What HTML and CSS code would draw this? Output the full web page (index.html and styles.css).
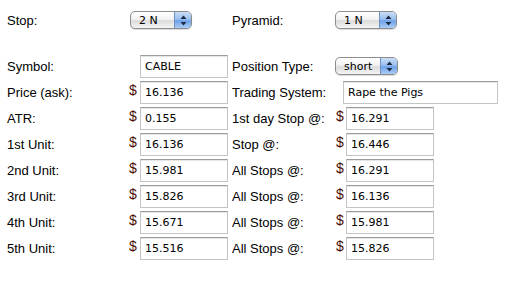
FILE: index.html
```html
<!DOCTYPE html>
<html>
<head>
<meta charset="utf-8">
<link rel="stylesheet" href="styles.css">
</head>
<body>
<div class="form">
  <div class="lbl">Stop:</div>
  <div class="c2 sel-cell"><div class="sel"><span class="sel-text">2 N</span><span class="sel-btn"><svg width="7" height="11" viewBox="0 0 7 11"><path d="M3.5 0.5 L6.5 4 L0.5 4 Z M0.5 7 L6.5 7 L3.5 10.5 Z" fill="#1d2a44"/></svg></span></div></div>
  <div class="lbl c3">Pyramid:</div>
  <div class="c4 sel-cell"><div class="sel"><span class="sel-text">1 N</span><span class="sel-btn"><svg width="7" height="11" viewBox="0 0 7 11"><path d="M3.5 0.5 L6.5 4 L0.5 4 Z M0.5 7 L6.5 7 L3.5 10.5 Z" fill="#1d2a44"/></svg></span></div></div>

  <div class="spacer"></div>

  <div class="lbl">Symbol:</div>
  <div class="c2"><span class="dol"></span><input class="inp" value="CABLE"></div>
  <div class="lbl c3">Position Type:</div>
  <div class="c4 sel-cell"><div class="sel sel-short"><span class="sel-text">short</span><span class="sel-btn"><svg width="7" height="11" viewBox="0 0 7 11"><path d="M3.5 0.5 L6.5 4 L0.5 4 Z M0.5 7 L6.5 7 L3.5 10.5 Z" fill="#1d2a44"/></svg></span></div></div>

  <div class="lbl">Price (ask):</div>
  <div class="c2"><span class="dol">$</span><input class="inp" value="16.136"></div>
  <div class="lbl c3">Trading System:</div>
  <div class="c4 wide-cell"><input class="inp wide" value="Rape the Pigs"></div>

  <div class="lbl">ATR:</div>
  <div class="c2"><span class="dol">$</span><input class="inp" value="0.155"></div>
  <div class="lbl c3">1st day Stop @:</div>
  <div class="c4"><span class="dol">$</span><input class="inp" value="16.291"></div>

  <div class="lbl">1st Unit:</div>
  <div class="c2"><span class="dol">$</span><input class="inp" value="16.136"></div>
  <div class="lbl c3">Stop @:</div>
  <div class="c4"><span class="dol">$</span><input class="inp" value="16.446"></div>

  <div class="lbl">2nd Unit:</div>
  <div class="c2"><span class="dol">$</span><input class="inp" value="15.981"></div>
  <div class="lbl c3">All Stops @:</div>
  <div class="c4"><span class="dol">$</span><input class="inp" value="16.291"></div>

  <div class="lbl">3rd Unit:</div>
  <div class="c2"><span class="dol">$</span><input class="inp" value="15.826"></div>
  <div class="lbl c3">All Stops @:</div>
  <div class="c4"><span class="dol">$</span><input class="inp" value="16.136"></div>

  <div class="lbl">4th Unit:</div>
  <div class="c2"><span class="dol">$</span><input class="inp" value="15.671"></div>
  <div class="lbl c3">All Stops @:</div>
  <div class="c4"><span class="dol">$</span><input class="inp" value="15.981"></div>

  <div class="lbl">5th Unit:</div>
  <div class="c2"><span class="dol">$</span><input class="inp" value="15.516"></div>
  <div class="lbl c3">All Stops @:</div>
  <div class="c4"><span class="dol">$</span><input class="inp" value="15.826"></div>
</div>
</body>
</html>
```
FILE: styles.css
```css
html, body {
  margin: 0;
  padding: 0;
  background: #ffffff;
}
body {
  padding: 7px 0 0 7px;
  font-family: "Liberation Sans", Arial, sans-serif;
  font-size: 13px;
  color: #000;
}
.form {
  display: grid;
  grid-template-columns: 118px 105px 100px 180px;
  grid-template-rows: 26px 20px;
  grid-auto-rows: 26px;
}
.spacer {
  grid-column: 1 / 5;
}
.lbl {
  display: flex;
  align-items: center;
  white-space: nowrap;
}
.c3 { padding-left: 2px; }
.c2, .c4 {
  display: flex;
  align-items: center;
}
.c2 { padding-left: 4px; }
.c4 { padding-left: 6px; }
.sel-cell.c2 { padding-left: 5px; }
.sel-cell.c4 { padding-left: 5px; }
.wide-cell.c4 { padding-left: 13px; }
.dol {
  width: 7px;
  margin-right: 4px;
  color: #4a0c04;
  font-size: 14px;
  line-height: 1;
  position: relative;
  top: -2px;
}
.c4 .dol { margin-right: 3px; }
.inp {
  box-sizing: border-box;
  width: 88px;
  height: 23px;
  margin: 0;
  padding: 0 0 0 4px;
  border: 1px solid #c4c4c4;
  border-top-color: #9c9c9c;
  box-shadow: inset 0 1px 0 #e6e6e6;
  background: #fff;
  font-family: "DejaVu Sans", Verdana, sans-serif;
  font-size: 11px;
  color: #000;
  outline: none;
}
.inp.wide { width: 155px; }
.sel {
  box-sizing: border-box;
  width: 62px;
  height: 18px;
  display: flex;
  align-items: stretch;
  border: 1px solid #8d8d8d;
  border-radius: 5px;
  overflow: hidden;
  background: linear-gradient(#ffffff 0%, #f2f2f2 45%, #dcdcdc 55%, #f4f4f4 100%);
  box-shadow: 0 1px 1px rgba(0,0,0,0.15);
}
.sel-short { width: 63px; }
.sel-text {
  flex: 1;
  display: flex;
  align-items: center;
  padding-left: 8px;
  font-family: "DejaVu Sans", Verdana, sans-serif;
  font-size: 11px;
  color: #000;
}
.sel-btn {
  width: 16px;
  display: flex;
  align-items: center;
  justify-content: center;
  border-left: 1px solid #6f8fc0;
  background: linear-gradient(#c9dcf6 0%, #9cc0f0 45%, #6ea2e8 55%, #a9cdf6 100%);
}
```
